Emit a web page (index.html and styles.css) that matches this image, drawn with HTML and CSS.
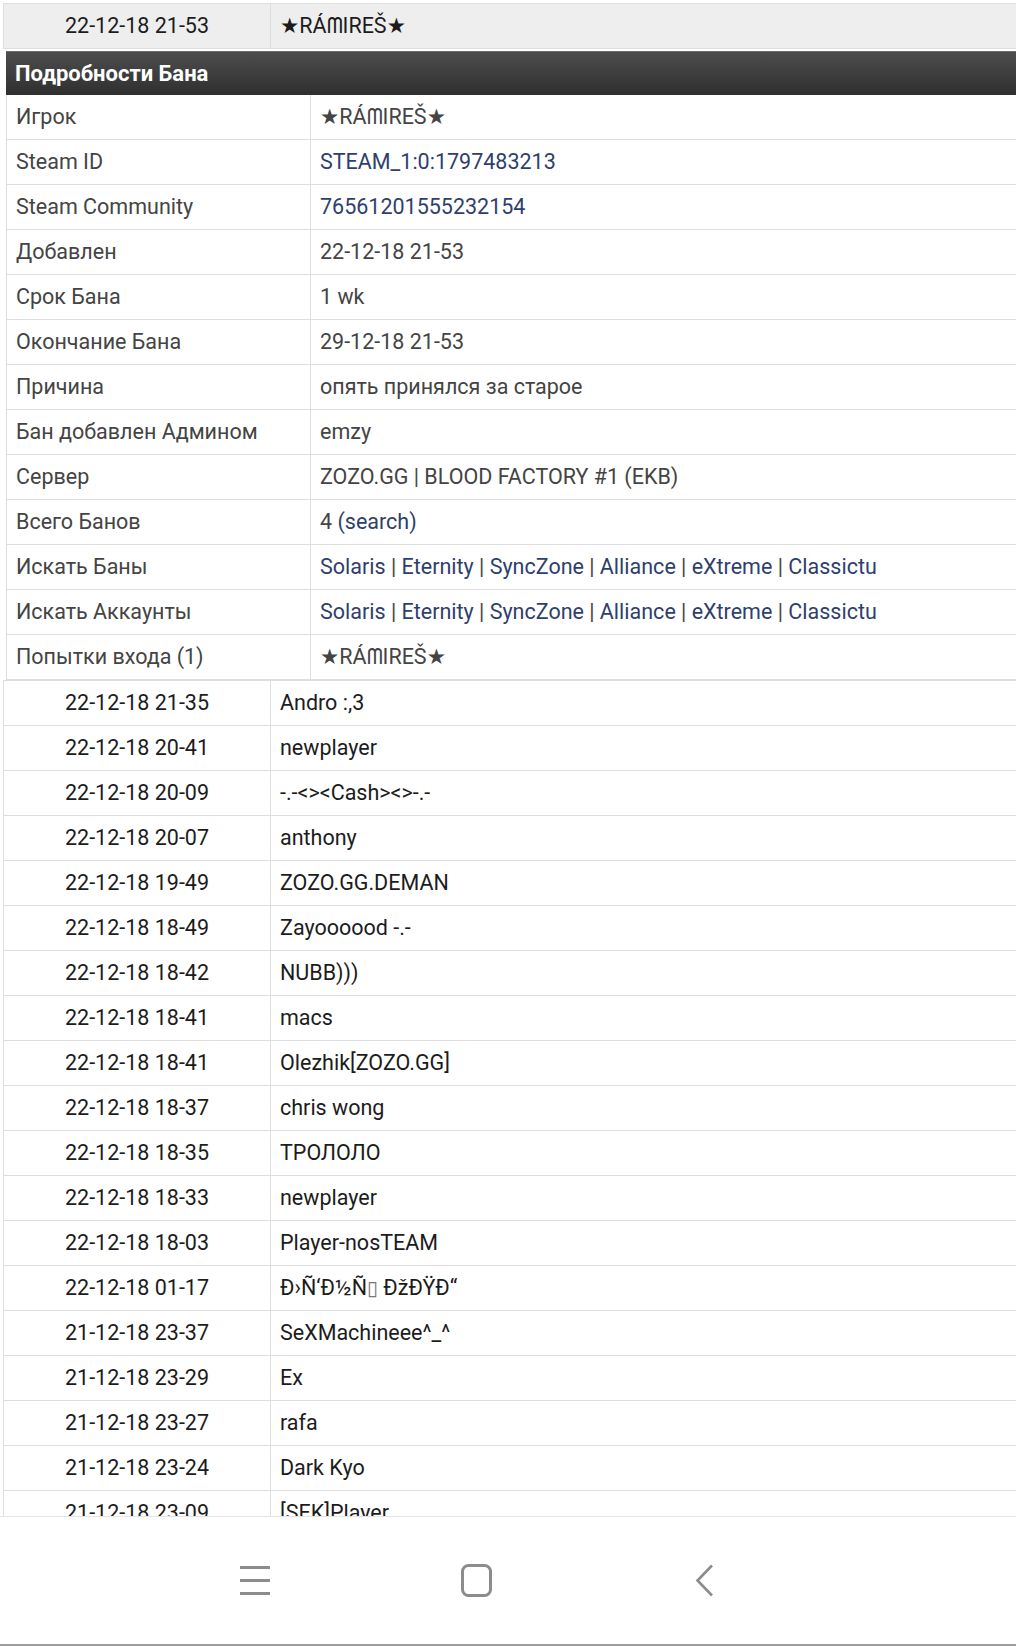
FILE: index.html
```html
<!DOCTYPE html>
<html lang="ru">
<head>
  <meta charset="UTF-8">
  <meta name="viewport" content="width=device-width, initial-scale=1.0">
  <title>Подробности Бана</title>
  <link rel="stylesheet" href="styles.css">
</head>
<body>
<div class="screen">
  <table class="list prev">
    <tr><td class="date">22-12-18 21-53</td><td>★RÁᗰIREŠ★</td></tr>
  </table>

  <div class="details">
    <div class="details-head">Подробности Бана</div>
    <table class="info">
      <tr><td class="label">Игрок</td><td>★RÁᗰIREŠ★</td></tr>
      <tr><td class="label">Steam ID</td><td><a href="#">STEAM_1:0:1797483213</a></td></tr>
      <tr><td class="label">Steam Community</td><td><a href="#">76561201555232154</a></td></tr>
      <tr><td class="label">Добавлен</td><td>22-12-18 21-53</td></tr>
      <tr><td class="label">Срок Бана</td><td>1 wk</td></tr>
      <tr><td class="label">Окончание Бана</td><td>29-12-18 21-53</td></tr>
      <tr><td class="label">Причина</td><td>опять принялся за старое</td></tr>
      <tr><td class="label">Бан добавлен Админом</td><td>emzy</td></tr>
      <tr><td class="label">Сервер</td><td>ZOZO.GG | BLOOD FACTORY #1 (EKB)</td></tr>
      <tr><td class="label">Всего Банов</td><td>4 <a href="#">(search)</a></td></tr>
      <tr><td class="label">Искать Баны</td><td><a href="#">Solaris</a> | <a href="#">Eternity</a> | <a href="#">SyncZone</a> | <a href="#">Alliance</a> | <a href="#">eXtreme</a> | <a href="#">Classictu</a></td></tr>
      <tr><td class="label">Искать Аккаунты</td><td><a href="#">Solaris</a> | <a href="#">Eternity</a> | <a href="#">SyncZone</a> | <a href="#">Alliance</a> | <a href="#">eXtreme</a> | <a href="#">Classictu</a></td></tr>
      <tr><td class="label">Попытки входа (1)</td><td>★RÁᗰIREŠ★</td></tr>
    </table>
  </div>

  <table class="list">
    <tr><td class="date">22-12-18 21-35</td><td>Andro :,3</td></tr>
    <tr><td class="date">22-12-18 20-41</td><td>newplayer</td></tr>
    <tr><td class="date">22-12-18 20-09</td><td>-.-&lt;&gt;&lt;Cash&gt;&lt;&gt;-.-</td></tr>
    <tr><td class="date">22-12-18 20-07</td><td>anthony</td></tr>
    <tr><td class="date">22-12-18 19-49</td><td>ZOZO.GG.DEMAN</td></tr>
    <tr><td class="date">22-12-18 18-49</td><td>Zayoooood -.-</td></tr>
    <tr><td class="date">22-12-18 18-42</td><td>NUBB)))</td></tr>
    <tr><td class="date">22-12-18 18-41</td><td>macs</td></tr>
    <tr><td class="date">22-12-18 18-41</td><td>Olezhik[ZOZO.GG]</td></tr>
    <tr><td class="date">22-12-18 18-37</td><td>chris wong</td></tr>
    <tr><td class="date">22-12-18 18-35</td><td>ТРОЛОЛО</td></tr>
    <tr><td class="date">22-12-18 18-33</td><td>newplayer</td></tr>
    <tr><td class="date">22-12-18 18-03</td><td>Player-nosTEAM</td></tr>
    <tr><td class="date">22-12-18 01-17</td><td>Ð›Ñ‘Ð½Ñ<span class="box">▯</span> ÐžÐŸÐ“</td></tr>
    <tr><td class="date">21-12-18 23-37</td><td>SeXMachineee^_^</td></tr>
    <tr><td class="date">21-12-18 23-29</td><td>Ex</td></tr>
    <tr><td class="date">21-12-18 23-27</td><td>rafa</td></tr>
    <tr><td class="date">21-12-18 23-24</td><td>Dark Kyo</td></tr>
    <tr><td class="date">21-12-18 23-09</td><td>[SEK]Player</td></tr>
  </table>
</div>

<nav class="navbar">
  <svg class="nav-menu" width="30" height="29" viewBox="0 0 30 29">
    <path d="M0 1.5H30M0 14.5H30M0 27.5H30" stroke="#8c8c8c" stroke-width="3" fill="none"/>
  </svg>
  <svg class="nav-home" width="31" height="33" viewBox="0 0 31 33">
    <rect x="1.5" y="1.5" width="28" height="30" rx="6" stroke="#8c8c8c" stroke-width="3" fill="none"/>
  </svg>
  <svg class="nav-back" width="19" height="33" viewBox="0 0 19 33">
    <path d="M17 1.5L2.5 16.5L17 31.5" stroke="#8c8c8c" stroke-width="2.6" fill="none"/>
  </svg>
</nav>
</body>
</html>
```

FILE: styles.css
```css
html, body {
  margin: 0;
  padding: 0;
}
body {
  width: 1016px;
  height: 1646px;
  overflow: hidden;
  background-color: white;
  font-family: Roboto, "Noto Sans", "DejaVu Sans", sans-serif;
  font-size: 21.5px;
  color: #333;
}
.screen {
  height: 1516px;
  overflow: hidden;
  padding-top: 3px;
  box-sizing: border-box;
}
table {
  border-collapse: collapse;
  width: 1040px;
}
td {
  padding: 0 9px;
  height: 44px;
  line-height: 44px;
  border: 1px solid #dedede;
  white-space: nowrap;
  vertical-align: middle;
}
a {
  color: #2f3f6d;
  text-decoration: none;
}

/* списки ников */
.list {
  margin-left: 3px;
  color: #1c1c1c;
}
.list td.date {
  width: 248px;
  text-align: center;
}
.list.prev td {
  background-color: #eeeeee;
}
.box {
  font-family: "DejaVu Sans", sans-serif;
  font-size: 20px;
  color: #777;
}

/* подробности бана */
.details {
  margin: 2px 0 0 6px;
}
.details-head {
  height: 43px;
  line-height: 43px;
  padding-left: 9px;
  border-top: 1px solid #6e6e6e;
  background: linear-gradient(#4d4d4d, #2f2f2f);
  color: white;
  font-size: 22px;
  font-weight: bold;
}
.info {
  width: 1040px;
  color: #444;
}
.info td {
  border-top: none;
}
.info td.label {
  width: 285px;
}

/* нижняя панель */
.navbar {
  height: 130px;
  border-top: 1px solid #e4e4e4;
  border-bottom: 2px solid #9c9c9c;
  display: flex;
  align-items: center;
  padding-left: 240px;
  box-sizing: border-box;
}
.nav-menu {
  margin-right: 191px;
}
.nav-home {
  margin-right: 203px;
}
```
